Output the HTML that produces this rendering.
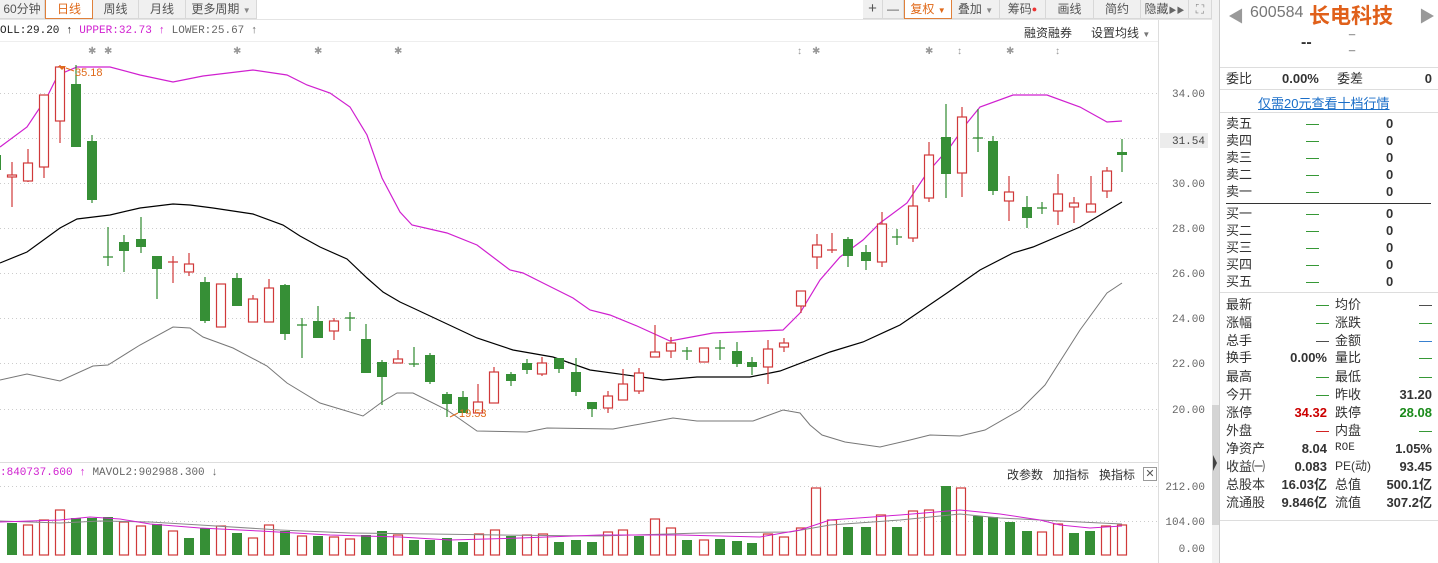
<!DOCTYPE html>
<html><head><meta charset="utf-8"><style>
*{margin:0;padding:0;box-sizing:border-box}
body{width:1438px;height:563px;overflow:hidden;background:#fff;font-family:"Liberation Sans","Noto Sans CJK SC",sans-serif;font-size:12px;color:#333;position:relative}
.a{position:absolute;white-space:nowrap}
.tb{position:absolute;top:0;height:19px;line-height:18px;background:#f0f0f0;border-right:1px solid #d8d8d8;border-bottom:1px solid #d8d8d8;text-align:center;color:#555;font-size:12px}
.sel{background:#fff;border:1px solid #e0803a;border-top:none;color:#e06a1a}
.mono{font-family:"Liberation Mono","Noto Sans CJK SC",monospace;font-size:11px}
.rp{position:absolute;left:1219px;top:0;width:219px;height:563px;border-left:1px solid #ccc;font-size:13px}
.row{position:absolute;left:6px;width:206px;height:17px;line-height:17px}
.row span{position:absolute}
.g{color:#1a8a1a}.r{color:#c00}.b{font-weight:bold;color:#333}
</style></head><body>
<div class="tb" style="left:0;width:45px">60分钟</div>
<div class="tb sel" style="left:45px;width:48px">日线</div>
<div class="tb" style="left:93px;width:46px">周线</div>
<div class="tb" style="left:139px;width:47px">月线</div>
<div class="tb" style="left:186px;width:71px">更多周期 <span style="font-size:8px;color:#888">▼</span></div>
<div class="tb" style="left:863px;width:20px;font-size:15px">+</div>
<div class="tb" style="left:883px;width:21px">—</div>
<div class="tb sel" style="left:904px;width:48px">复权 <span style="font-size:8px">▼</span></div>
<div class="tb" style="left:952px;width:48px">叠加 <span style="font-size:8px;color:#888">▼</span></div>
<div class="tb" style="left:1000px;width:46px">筹码<span style="color:#e33;font-size:9px;vertical-align:top">●</span></div>
<div class="tb" style="left:1046px;width:48px">画线</div>
<div class="tb" style="left:1094px;width:47px">简约</div>
<div class="tb" style="left:1141px;width:48px">隐藏<span style="font-size:8px;color:#666">▶▶</span></div>
<div class="tb" style="left:1189px;width:23px;color:#888">⛶</div>
<div class="a" style="left:0;top:19px;width:1212px;border-top:1px solid #e4e4e4"></div>

<div class="a mono" style="left:0;top:25px"><span style="color:#222">OLL:29.20 ↑</span> <span style="color:#d020d0">UPPER:32.73 ↑</span> <span style="color:#666">LOWER:25.67 ↑</span></div>
<div class="a" style="left:1024px;top:24px">融资融券</div>
<div class="a" style="left:1091px;top:24px">设置均线 <span style="font-size:8px;color:#777">▼</span></div>
<div class="a" style="left:0;top:41px;width:1158px;border-top:1px solid #eee"></div>

<svg class="a" style="left:0;top:0" width="1219" height="563">
<g fill="#999" font-size="10" font-family="Liberation Sans">
<text x="88" y="54">✱</text><text x="104" y="54">✱</text><text x="233" y="54">✱</text><text x="314" y="54">✱</text><text x="394" y="54">✱</text>
<text x="797" y="54">↕</text><text x="812" y="54">✱</text><text x="925" y="54">✱</text><text x="957" y="54">↕</text><text x="1006" y="54">✱</text><text x="1055" y="54">↕</text>
</g>
<g stroke="#ccc" stroke-dasharray="1,3">
<line x1="0" x2="1158" y1="93.5" y2="93.5"/><line x1="0" x2="1158" y1="138.5" y2="138.5"/><line x1="0" x2="1158" y1="183.5" y2="183.5"/><line x1="0" x2="1158" y1="228.5" y2="228.5"/><line x1="0" x2="1158" y1="273.5" y2="273.5"/><line x1="0" x2="1158" y1="318.5" y2="318.5"/><line x1="0" x2="1158" y1="363.5" y2="363.5"/><line x1="0" x2="1158" y1="409.5" y2="409.5"/>
<line x1="0" x2="1158" y1="486.5" y2="486.5"/><line x1="0" x2="1158" y1="521.5" y2="521.5"/>
</g>
<line x1="1158.5" x2="1158.5" y1="20" y2="563" stroke="#ddd"/>
<line x1="1212.5" x2="1212.5" y1="0" y2="563" stroke="#ddd"/>
<rect x="1212" y="0" width="7" height="563" fill="#f2f2f2"/>
<rect x="1212" y="405" width="7" height="120" fill="#d4d4d4"/>
<path d="M1213 455 L1217 463 L1213 471Z" fill="#444"/>
<line x1="0" x2="1158" y1="462.5" y2="462.5" stroke="#ddd"/>
<g class="mono" fill="#666" font-family="Liberation Mono" font-size="11" text-anchor="end">
<text x="1205" y="97">34.00</text><text x="1205" y="187">30.00</text><text x="1205" y="232">28.00</text><text x="1205" y="277">26.00</text><text x="1205" y="322">24.00</text><text x="1205" y="367">22.00</text><text x="1205" y="413">20.00</text>
<text x="1205" y="490">212.00</text><text x="1205" y="525">104.00</text><text x="1205" y="552">0.00</text>
</g>
<rect x="1160" y="133" width="48" height="15" fill="#ececec"/>
<text x="1205" y="144" text-anchor="end" font-family="Liberation Mono" font-size="11" fill="#444">31.54</text>

<!-- bands -->
<polyline fill="none" stroke="#000" stroke-width="1.2" points="0,263 27,252 60,228 77,219 110,215 140,208 173,204 190,205 213,208 253,214 283,225 300,236 320,247 347,259 367,278 383,292 400,302 413,308 477,338 513,350 553,357 590,370 663,380 697,377 750,377 780,371 830,352 863,342 900,325 947,293 980,270 1013,253 1033,247 1080,227 1122,202"/>
<polyline fill="none" stroke="#d020d0" stroke-width="1.2" points="0,147 27,127 47,97 58,75 77,67 110,67 140,75 173,82 203,76 253,70 287,75 307,85 330,93 350,107 367,135 382,178 400,212 412,225 447,233 477,245 510,270 523,273 543,283 573,298 590,310 610,315 637,326 670,341 713,333 783,330 800,313 820,280 840,257 863,240 880,223 907,203 927,173 950,147 967,123 980,107 1013,95 1047,95 1080,107 1107,122 1122,121"/>
<polyline fill="none" stroke="#777" stroke-width="1" points="0,380 27,374 60,381 93,366 108,365 140,345 173,327 190,328 203,337 233,348 267,366 287,383 320,403 363,416 382,402 397,393 413,393 447,410 477,431 527,432 547,428 613,429 673,418 697,421 753,421 783,410 800,413 810,425 822,435 845,442 880,447 910,440 930,435 960,436 985,430 1020,410 1045,385 1080,330 1107,293 1122,283"/>

<!-- green candles -->
<path stroke="#2f8a2f" stroke-width="1.2" fill="none" d="M-4 140V175M76 65V147M92 135V203M108 227V266M124 235V272M141 217V253M157 256V299M205 277V323M237 273V306M285 284V340M302 318V358M318 306V338M350 312V331M366 324V373M382 360V405M414 347V367M430 353V384M447 392V417M463 391V413M511 372V386M527 359V374M559 358V373M576 358V396M592 402V417M687 347V360M720 340V360M737 342V367M752 357V375M848 237V267M866 245V270M897 229V245M946 104V198M978 109V152M993 136V195M1027 196V228M1042 202V214M1122 139V172
M103 257H113M345 318H355M297 325H307M409 364H419M682 351H692M715 348H725M892 237H902M973 138H983M1037 208H1047"/>
<g fill="#368f36">
<rect x="-9" y="155" width="10" height="15"/><rect x="71" y="84" width="10" height="63"/><rect x="87" y="141" width="10" height="59"/><rect x="119" y="242" width="10" height="9"/><rect x="136" y="239" width="10" height="8"/><rect x="152" y="256" width="10" height="13"/><rect x="200" y="282" width="10" height="39"/><rect x="232" y="278" width="10" height="28"/><rect x="280" y="285" width="10" height="49"/><rect x="313" y="321" width="10" height="17"/><rect x="361" y="339" width="10" height="34"/><rect x="377" y="362" width="10" height="15"/><rect x="425" y="355" width="10" height="27"/><rect x="442" y="394" width="10" height="10"/><rect x="458" y="397" width="10" height="16"/><rect x="506" y="374" width="10" height="7"/><rect x="522" y="363" width="10" height="7"/><rect x="554" y="358" width="10" height="11"/><rect x="571" y="372" width="10" height="20"/><rect x="587" y="402" width="10" height="7"/><rect x="732" y="351" width="10" height="13"/><rect x="747" y="362" width="10" height="5"/><rect x="843" y="239" width="10" height="17"/><rect x="861" y="252" width="10" height="9"/><rect x="941" y="137" width="10" height="37"/><rect x="988" y="141" width="10" height="50"/><rect x="1022" y="207" width="10" height="11"/><rect x="1117" y="152" width="10" height="3"/>
</g>
<!-- red candles -->
<path stroke="#d0393a" stroke-width="1.2" fill="none" d="M12 162V207M28 149V182M44 95V178M60 65V143M173 256V283M189 253V276M253 295V322M269 279V322M334 318V340M398 350V363M478 384V413M494 367V403M542 357V376M608 391V413M623 369V400M639 368V394M655 325V357M671 337V358M768 340V384M784 338V352M801 291V313M817 234V269M832 233V253M882 212V267M913 185V242M929 142V202M962 107V197M1009 176V221M1058 174V225M1074 197V223M1091 176V212M1107 167V198
M168 262H178M827 250H837"/>
<g fill="#fff" stroke="#d0393a" stroke-width="1.2">
<rect x="7.5" y="175" width="9" height="2"/><rect x="23.5" y="163" width="9" height="18"/><rect x="39.5" y="95" width="9" height="72"/><rect x="55.5" y="67" width="9" height="54"/><rect x="184.5" y="264" width="9" height="8"/><rect x="216.5" y="284" width="9" height="43"/><rect x="248.5" y="299" width="9" height="23"/><rect x="264.5" y="288" width="9" height="34"/><rect x="329.5" y="321" width="9" height="10"/><rect x="393.5" y="359" width="9" height="4"/><rect x="473.5" y="402" width="9" height="11"/><rect x="489.5" y="372" width="9" height="31"/><rect x="537.5" y="363" width="9" height="11"/><rect x="603.5" y="396" width="9" height="12"/><rect x="618.5" y="384" width="9" height="16"/><rect x="634.5" y="373" width="9" height="18"/><rect x="650.5" y="352" width="9" height="5"/><rect x="666.5" y="343" width="9" height="8"/><rect x="699.5" y="348" width="9" height="14"/><rect x="763.5" y="349" width="9" height="18"/><rect x="779.5" y="343" width="9" height="4"/><rect x="796.5" y="291" width="9" height="15"/><rect x="812.5" y="245" width="9" height="12"/><rect x="877.5" y="224" width="9" height="38"/><rect x="908.5" y="206" width="9" height="32"/><rect x="924.5" y="155" width="9" height="43"/><rect x="957.5" y="117" width="9" height="56"/><rect x="1004.5" y="192" width="9" height="9"/><rect x="1053.5" y="194" width="9" height="17"/><rect x="1069.5" y="203" width="9" height="4"/><rect x="1086.5" y="204" width="9" height="8"/><rect x="1102.5" y="171" width="9" height="20"/>
</g>
<g fill="#e06a1a" font-family="Liberation Sans" font-size="11">
<path d="M58 66 L66 66 L62 70Z"/><line x1="66" y1="68" x2="74" y2="71" stroke="#e06a1a"/><text x="75" y="76">35.18</text>
<line x1="450" y1="417" x2="458" y2="413" stroke="#e06a1a"/><text x="459" y="417">19.53</text>
</g>

<!-- volume -->
<g fill="#368f36">
<rect x="7" y="523" width="10" height="32"/><rect x="71" y="518" width="10" height="37"/><rect x="87" y="518" width="10" height="37"/><rect x="103" y="517" width="10" height="38"/><rect x="152" y="524" width="10" height="31"/><rect x="184" y="538" width="10" height="17"/><rect x="200" y="528" width="10" height="27"/><rect x="232" y="533" width="10" height="22"/><rect x="280" y="531" width="10" height="24"/><rect x="313" y="536" width="10" height="19"/><rect x="361" y="535" width="10" height="20"/><rect x="377" y="531" width="10" height="24"/><rect x="409" y="540" width="10" height="15"/><rect x="425" y="540" width="10" height="15"/><rect x="442" y="538" width="10" height="17"/><rect x="458" y="542" width="10" height="13"/><rect x="506" y="536" width="10" height="19"/><rect x="554" y="542" width="10" height="13"/><rect x="571" y="540" width="10" height="15"/><rect x="587" y="542" width="10" height="13"/><rect x="634" y="536" width="10" height="19"/><rect x="682" y="540" width="10" height="15"/><rect x="715" y="539" width="10" height="16"/><rect x="732" y="541" width="10" height="14"/><rect x="747" y="543" width="10" height="12"/><rect x="843" y="527" width="10" height="28"/><rect x="861" y="527" width="10" height="28"/><rect x="892" y="527" width="10" height="28"/><rect x="941" y="486" width="10" height="69"/><rect x="973" y="516" width="10" height="39"/><rect x="988" y="517" width="10" height="38"/><rect x="1005" y="522" width="10" height="33"/><rect x="1022" y="531" width="10" height="24"/><rect x="1069" y="533" width="10" height="22"/><rect x="1085" y="531" width="10" height="24"/>
</g>
<g fill="#fff" stroke="#d0393a" stroke-width="1.2">
<rect x="23.5" y="525" width="9" height="30"/><rect x="39.5" y="520" width="9" height="35"/><rect x="55.5" y="510" width="9" height="45"/><rect x="119.5" y="522" width="9" height="33"/><rect x="136.5" y="526" width="9" height="29"/><rect x="168.5" y="531" width="9" height="24"/><rect x="216.5" y="526" width="9" height="29"/><rect x="248.5" y="538" width="9" height="17"/><rect x="264.5" y="525" width="9" height="30"/><rect x="297.5" y="536" width="9" height="19"/><rect x="329.5" y="537" width="9" height="18"/><rect x="345.5" y="539" width="9" height="16"/><rect x="393.5" y="535" width="9" height="20"/><rect x="474.5" y="534" width="9" height="21"/><rect x="490.5" y="530" width="9" height="25"/><rect x="522.5" y="535" width="9" height="20"/><rect x="538.5" y="534" width="9" height="21"/><rect x="603.5" y="532" width="9" height="23"/><rect x="618.5" y="530" width="9" height="25"/><rect x="650.5" y="519" width="9" height="36"/><rect x="666.5" y="528" width="9" height="27"/><rect x="699.5" y="540" width="9" height="15"/><rect x="763.5" y="534" width="9" height="21"/><rect x="779.5" y="537" width="9" height="18"/><rect x="796.5" y="528" width="9" height="27"/><rect x="811.5" y="488" width="9" height="67"/><rect x="827.5" y="520" width="9" height="35"/><rect x="876.5" y="515" width="9" height="40"/><rect x="908.5" y="511" width="9" height="44"/><rect x="924.5" y="510" width="9" height="45"/><rect x="956.5" y="488" width="9" height="67"/><rect x="1037.5" y="532" width="9" height="23"/><rect x="1053.5" y="524" width="9" height="31"/><rect x="1101.5" y="526" width="9" height="29"/><rect x="1117.5" y="525" width="9" height="30"/>
</g>
<polyline fill="none" stroke="#888" points="0,521 60,523 100,521 150,522 200,525 280,530 350,533 430,534 500,535 600,536 700,533 790,532 830,525 900,520 960,514 1000,518 1040,520 1080,522 1122,524"/>
<polyline fill="none" stroke="#d020d0" points="0,522 30,521 60,520 90,517 120,519 150,524 200,528 260,531 330,535 400,537 450,540 520,538 600,535 680,535 760,537 800,530 830,520 900,515 960,510 1000,514 1020,517 1040,520 1060,525 1090,528 1122,526"/>
</svg>

<div class="a mono" style="left:0;top:467px"><span style="color:#d020d0">:840737.600 ↑</span> <span style="color:#666">MAVOL2:902988.300 ↓</span></div>
<div class="a" style="left:1007px;top:466px">改参数&nbsp;&nbsp; 加指标&nbsp;&nbsp; 换指标</div>
<div class="a" style="left:1143px;top:467px;width:14px;height:14px;border:1px solid #999;font-size:11px;line-height:12px;text-align:center;color:#555">✕</div>

<div class="rp">
<div class="a" style="left:8px;top:3px;color:#999;font-size:16px">◀</div>
<div class="a" style="left:30px;top:4px;color:#777;font-size:16px">600584</div>
<div class="a" style="left:89px;top:0;color:#e0601a;font-size:21px;font-weight:bold">长电科技</div>
<div class="a" style="left:199px;top:3px;color:#999;font-size:16px">▶</div>
<div class="a" style="left:81px;top:34px;font-weight:bold;font-size:16px;color:#333">--</div>
<div class="a" style="left:129px;top:24px;color:#555;font-size:11px">_</div>
<div class="a" style="left:129px;top:40px;color:#555;font-size:11px">_</div>
<div class="a" style="left:0;top:67px;width:219px;border-top:1px solid #ddd"></div>
<div class="row" style="top:70px"><span style="left:0">委比</span><span class="b" style="left:56px">0.00%</span><span style="left:111px">委差</span><span class="b" style="right:0">0</span></div>
<div class="a" style="left:0;top:89px;width:219px;border-top:1px solid #ddd"></div>
<div class="a" style="left:38px;top:93px;color:#1a6ec8;text-decoration:underline">仅需20元查看十档行情</div>
<div class="a" style="left:0;top:112px;width:219px;border-top:1px solid #ddd"></div>
<div class="row" style="top:115px"><span style="left:0">卖五</span><span class="g" style="left:80px">—</span><span class="b" style="left:160px">0</span></div>
<div class="row" style="top:132px"><span style="left:0">卖四</span><span class="g" style="left:80px">—</span><span class="b" style="left:160px">0</span></div>
<div class="row" style="top:149px"><span style="left:0">卖三</span><span class="g" style="left:80px">—</span><span class="b" style="left:160px">0</span></div>
<div class="row" style="top:166px"><span style="left:0">卖二</span><span class="g" style="left:80px">—</span><span class="b" style="left:160px">0</span></div>
<div class="row" style="top:183px"><span style="left:0">卖一</span><span class="g" style="left:80px">—</span><span class="b" style="left:160px">0</span></div>
<div class="a" style="left:6px;top:203px;width:205px;border-top:1px solid #333"></div>
<div class="row" style="top:205px"><span style="left:0">买一</span><span class="g" style="left:80px">—</span><span class="b" style="left:160px">0</span></div>
<div class="row" style="top:222px"><span style="left:0">买二</span><span class="g" style="left:80px">—</span><span class="b" style="left:160px">0</span></div>
<div class="row" style="top:239px"><span style="left:0">买三</span><span class="g" style="left:80px">—</span><span class="b" style="left:160px">0</span></div>
<div class="row" style="top:256px"><span style="left:0">买四</span><span class="g" style="left:80px">—</span><span class="b" style="left:160px">0</span></div>
<div class="row" style="top:273px"><span style="left:0">买五</span><span class="g" style="left:80px">—</span><span class="b" style="left:160px">0</span></div>
<div class="a" style="left:0;top:292px;width:219px;border-top:1px solid #ddd"></div>
<div class="row" style="top:296px"><span style="left:0">最新</span><span class="g" style="left:90px">—</span><span style="left:109px">均价</span><span style="right:0">—</span></div>
<div class="row" style="top:314px"><span style="left:0">涨幅</span><span class="g" style="left:90px">—</span><span style="left:109px">涨跌</span><span class="g" style="right:0">—</span></div>
<div class="row" style="top:332px"><span style="left:0">总手</span><span style="left:90px">—</span><span style="left:109px">金额</span><span style="right:0;color:#1a6ec8">—</span></div>
<div class="row" style="top:349px"><span style="left:0">换手</span><span class="b" style="right:105px">0.00%</span><span style="left:109px">量比</span><span class="g" style="right:0">—</span></div>
<div class="row" style="top:368px"><span style="left:0">最高</span><span class="g" style="left:90px">—</span><span style="left:109px">最低</span><span class="g" style="right:0">—</span></div>
<div class="row" style="top:386px"><span style="left:0">今开</span><span class="g" style="left:90px">—</span><span style="left:109px">昨收</span><span class="b" style="right:0">31.20</span></div>
<div class="row" style="top:404px"><span style="left:0">涨停</span><span class="b r" style="right:105px;color:#c00">34.32</span><span style="left:109px">跌停</span><span class="b" style="right:0;color:#1a8a1a">28.08</span></div>
<div class="row" style="top:422px"><span style="left:0">外盘</span><span class="r" style="left:90px">—</span><span style="left:109px">内盘</span><span class="g" style="right:0">—</span></div>
<div class="row" style="top:440px"><span style="left:0">净资产</span><span class="b" style="right:105px">8.04</span><span style="left:109px;font-family:'Liberation Mono';font-size:11px">ROE</span><span class="b" style="right:0">1.05%</span></div>
<div class="row" style="top:458px"><span style="left:0">收益㈠</span><span class="b" style="right:105px">0.083</span><span style="left:109px;font-size:12px">PE(动)</span><span class="b" style="right:0">93.45</span></div>
<div class="row" style="top:476px"><span style="left:0">总股本</span><span class="b" style="right:105px">16.03亿</span><span style="left:109px">总值</span><span class="b" style="right:0">500.1亿</span></div>
<div class="row" style="top:494px"><span style="left:0">流通股</span><span class="b" style="right:105px">9.846亿</span><span style="left:109px">流值</span><span class="b" style="right:0">307.2亿</span></div>
<div class="a" style="left:0;top:520px;width:219px;border-top:1px solid #ddd"></div>
</div>
</body></html>
